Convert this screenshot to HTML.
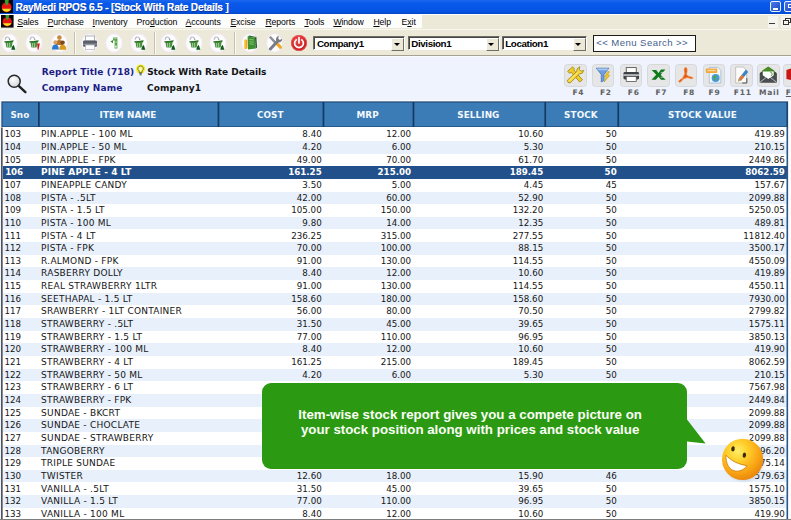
<!DOCTYPE html>
<html><head><meta charset="utf-8"><title>RayMedi RPOS 6.5</title>
<style>
html,body{margin:0;padding:0}
body{width:791px;height:520px;overflow:hidden;position:relative;background:#eef3fd;font-family:"Liberation Sans",sans-serif}
div,span{box-sizing:border-box}
.abs{position:absolute}
#title{left:0;top:0;width:791px;height:14.4px;background:linear-gradient(#1a66ee 0,#0858ea 25%,#0654e4 80%,#0448c8 100%)}
#title .t{position:absolute;left:15.6px;top:0.7px;font:bold 10px/13.6px "Liberation Sans",sans-serif;color:#fff;white-space:nowrap;letter-spacing:-0.13px;text-shadow:0.6px 0.6px 0 #0a3796,0.3px 0 0 #fff}
.wb{position:absolute;top:1.2px;width:10.8px;height:11px;border:1px solid #e8effc;border-radius:2px;background:linear-gradient(135deg,#4a7ae8,#1c48c4)}
#menubg{left:0;top:14.4px;width:791px;height:14.6px;background:#ece9d8;border-top:1px solid #fdfdfb}
#menu{left:0;top:14.4px;width:791px;height:14.6px;border-top:1px solid transparent}
#menuw{left:0;top:15px;width:421.5px;height:13.2px;background:#fdfdfc}
#menu span{position:absolute;top:-0.6px;font:8.7px/14px "Liberation Sans",sans-serif;color:#000;white-space:nowrap;letter-spacing:-0.08px}
#menu u{text-decoration:underline}
#tool{left:0;top:29px;width:791px;height:26px;background:#ece9d8;border-top:1px solid #f8f7f0}
#tline{left:0;top:54.8px;width:791px;height:1.3px;background:#a5a294}
#tline2{left:0;top:56.1px;width:791px;height:1.3px;background:#fafbfd}
.blob{position:absolute;border-radius:50%;background:radial-gradient(closest-side,#fff 0,#fdfcfc 70%,#ede6e8 88%,rgba(236,232,220,0) 100%)}
.combo{position:absolute;top:36px;height:14px;background:#fff;border:1px solid #6e6e64;border-right-color:#fff;border-bottom-color:#fff;box-shadow:inset 1px 1px 0 #444;font:bold 9.8px/14.2px "Liberation Sans",sans-serif;color:#000;padding-left:2.7px;white-space:nowrap;letter-spacing:-0.4px}
.combo i{position:absolute;right:0;top:1.4px;width:11.2px;height:10.8px;background:#ece9d8;border:1px solid #fff;border-right-color:#6e6e64;border-bottom-color:#6e6e64}
.combo i:after{content:"";position:absolute;left:1.6px;top:3.2px;border:3.2px solid transparent;border-top:3.4px solid #000;border-bottom:0}
#msearch{left:592.6px;top:35px;width:103.2px;height:16.6px;background:#fff;border:1px solid #1c1c1c;font:9.6px/13px "Liberation Sans",sans-serif;color:#44628c;padding-left:2.6px;letter-spacing:0.42px;white-space:nowrap}
.lbl{position:absolute;font:bold 9px/12px "DejaVu Sans",sans-serif;white-space:nowrap;letter-spacing:0.12px}
#thw{left:0;top:99.6px;width:791px;height:1.8px;background:#fbfcfe}
#th{left:1.4px;top:101.4px;width:786.7px;height:26px}
#th span{position:absolute;top:1px;height:24px;font:bold 8.8px/27.6px "DejaVu Sans",sans-serif;color:#f4f8fc;text-align:center;white-space:nowrap;letter-spacing:0.1px}
#tb{left:1.4px;top:127.3px;width:786.7px;height:393px;background:#fff}
#rt{left:788.1px;top:99.6px;width:3px;height:421px;background:#fbfcfe}
.r{position:absolute;left:2.6px;width:784.4px;height:12.65px;font:8.7px/12.9px "DejaVu Sans",sans-serif;color:#161616;white-space:nowrap}
.r.alt{background:#e8f0fb}
.r.sel{background:#22508a;color:#fff;font-weight:bold}
.r span{position:absolute;top:0}
.c0{left:1.9px}.sel .c0{left:2.6px;letter-spacing:-0.15px}.c1{left:38.5px;font-size:9px;letter-spacing:0.25px}
.sel .c1{letter-spacing:0.1px}
.c2{right:465.3px}.c3{right:375.9px}.c4{right:243.8px}.c5{right:170.3px}.c6{right:2.2px}
#bubble{left:262px;top:382.8px;width:425.4px;height:85.8px;background:#2b9a12;border-radius:9px}
#btail{left:686px;top:419px}
#bubble .t{position:absolute;left:-4.6px;top:24.6px;width:425.4px;text-align:center;font:bold 13.3px/15px "Liberation Sans",sans-serif;color:#fbfff6;white-space:nowrap}
.fk{position:absolute;top:87.4px;font:bold 7.5px/11px "DejaVu Sans",sans-serif;color:#606060;white-space:nowrap;letter-spacing:0.75px}
.fb{position:absolute;top:64.1px;height:22.8px;border-radius:3.5px;background:#e6e6e6;border:1px solid #d6d8dc}
</style></head><body>
<div id="title" class="abs"><span class="t">RayMedi RPOS 6.5 - [Stock With Rate Details ]</span>
<div class="wb" style="left:770.3px"><div class="abs" style="left:1.8px;top:5.6px;width:4.6px;height:2px;background:#fff"></div></div>
<div class="wb" style="left:783.6px"><div class="abs" style="left:3px;top:2px;width:4px;height:3.4px;border:1px solid #fff;border-top-width:1.6px"></div></div>
</div>
<svg class="abs" style="left:0px;top:0px" width="13.4" height="13.4" viewBox="0 0 13 13"><rect width="13" height="13" fill="#060606"/><circle cx="6.4" cy="7" r="4.8" fill="#e81414"/><path d="M2 8.6 h8.8 a4.8 4.8 0 0 1 -8.8 0z" fill="#f0e020"/><path d="M4.6 0 H8.6 L7.6 4.6 Q6.4 5.4 5.4 4.6z" fill="#3c9a2c"/></svg>
<div id="menubg" class="abs"></div><div id="menuw" class="abs"></div>
<div id="menu" class="abs">
<span style="left:17.2px"><u>S</u>ales</span>
<span style="left:47.6px"><u>P</u>urchase</span>
<span style="left:92.6px"><u>I</u>nventory</span>
<span style="left:136.6px">Pro<u>d</u>uction</span>
<span style="left:185.6px"><u>A</u>ccounts</span>
<span style="left:230.4px"><u>E</u>xcise</span>
<span style="left:265.4px"><u>R</u>eports</span>
<span style="left:304.4px"><u>T</u>ools</span>
<span style="left:333.4px"><u>W</u>indow</span>
<span style="left:373.4px"><u>H</u>elp</span>
<span style="left:401.6px">E<u>x</u>it</span>
</div>
<svg class="abs" style="left:1.4px;top:15.2px" width="12.6" height="12.6" viewBox="0 0 13 13"><rect width="13" height="13" fill="#060606"/><circle cx="6.4" cy="7" r="4.8" fill="#e81414"/><path d="M2 8.6 h8.8 a4.8 4.8 0 0 1 -8.8 0z" fill="#f0e020"/><path d="M4.6 0 H8.6 L7.6 4.6 Q6.4 5.4 5.4 4.6z" fill="#3c9a2c"/></svg>
<div class="abs" style="left:767.8px;top:16px;width:10.2px;height:11.6px;background:#f5f4ee"></div><div class="abs" style="left:781px;top:16px;width:10px;height:11.6px;background:#f5f4ee"></div>
<div class="abs" style="left:769.4px;top:22.8px;width:5.2px;height:1.7px;background:#3a3a3a"></div>
<div class="abs" style="left:785.4px;top:17.8px;width:6px;height:5px;border:1px solid #333;border-top-width:1.6px"></div>
<div class="abs" style="left:783.2px;top:20.2px;width:6px;height:5px;border:1px solid #333;border-top-width:1.6px;background:#f5f4ee"></div>
<div id="tool" class="abs"></div>
<div id="tline" class="abs"></div><div id="tline2" class="abs"></div>
<div class="combo" style="left:313.2px;width:92px">Company1<i></i></div>
<div class="combo" style="left:407.6px;width:92.2px">Division1<i></i></div>
<div class="combo" style="left:501.6px;width:85.4px">Location1<i></i></div>
<div id="msearch" class="abs">&lt;&lt; Menu Search &gt;&gt;</div>
<span class="lbl" style="left:41.8px;top:66.1px;color:#1c1c84">Report Title (718)</span>
<span class="lbl" style="left:147.2px;top:66.1px;color:#141414;letter-spacing:-0.05px">Stock With Rate Details</span>
<span class="lbl" style="left:41.8px;top:81.8px;color:#1c1c84">Company Name</span>
<span class="lbl" style="left:147px;top:81.8px;color:#141414">Company1</span>
<div class="blob" style="left:-0.4px;top:32.1px;width:19.6px;height:22px"></div>
<div class="blob" style="left:24.4px;top:32.1px;width:19.6px;height:22px"></div>
<div class="blob" style="left:49.6px;top:32.1px;width:19.6px;height:22px"></div>
<div class="blob" style="left:79.9px;top:32.1px;width:19.6px;height:22px"></div>
<div class="blob" style="left:104.1px;top:32.1px;width:19.6px;height:22px"></div>
<div class="blob" style="left:129.0px;top:32.1px;width:19.6px;height:22px"></div>
<div class="blob" style="left:159.4px;top:32.1px;width:19.6px;height:22px"></div>
<div class="blob" style="left:184.4px;top:32.1px;width:19.6px;height:22px"></div>
<div class="blob" style="left:208.4px;top:32.1px;width:19.6px;height:22px"></div>
<div class="blob" style="left:240.4px;top:32.1px;width:19.6px;height:22px"></div>
<div class="blob" style="left:264.8px;top:32.1px;width:19.6px;height:22px"></div>
<svg class="abs" style="left:-0.6px;top:32.7px" width="20" height="20" viewBox="0 0 20 20">
<path d="M6.2 6.8 C6.2 3.2 10.2 3 10.6 6.2" fill="none" stroke="#b9b6cc" stroke-width="1.1"/>
<path d="M10 5.6 l1.6 0.4 l-1.2 1.2z" fill="#6d8f6d"/>
<path d="M5.2 8.6 L14.6 7.6 L13.6 9.6 L12.6 14.6 L7.4 14.6 L6.6 9.8z" fill="#468f3c"/>
<path d="M5.2 8.6 L14.6 7.6 L14.2 8.8 L5.8 9.6z" fill="#2c7028"/>
<path d="M8.6 10 v4.2 M10.6 10 v4.2" stroke="#c9e6c0" stroke-width="0.7"/>
<path d="M12.2 16.8 l1.2 -3.6 l0.9 -1.4 l0.9 1.4 l1.1 3.6z" fill="#0d5a1c"/>
</svg>
<svg class="abs" style="left:24.2px;top:32.7px" width="20" height="20" viewBox="0 0 20 20">
<path d="M6.2 6.8 C6.2 3.2 10.2 3 10.6 6.2" fill="none" stroke="#b9b6cc" stroke-width="1.1"/>
<path d="M10 5.6 l1.6 0.4 l-1.2 1.2z" fill="#6d8f6d"/>
<path d="M5.2 8.6 L14.6 7.6 L13.6 9.6 L12.6 14.6 L7.4 14.6 L6.6 9.8z" fill="#468f3c"/>
<path d="M5.2 8.6 L14.6 7.6 L14.2 8.8 L5.8 9.6z" fill="#2c7028"/>
<path d="M8.6 10 v4.2 M10.6 10 v4.2" stroke="#c9e6c0" stroke-width="0.7"/>
<path d="M13.2 10.5 l2.6 0 l-0.6 3 l-0.7 3.2 l-0.9 0z" fill="#e0101c"/>
</svg>
<svg class="abs" style="left:49.4px;top:32.7px" width="20" height="20" viewBox="0 0 20 20">
<circle cx="10.4" cy="4.6" r="2.3" fill="#c98a3a"/><path d="M6.8 12 q0 -5 3.6 -5 q3.6 0 3.6 5z" fill="#b5722c"/>
<circle cx="6.4" cy="9.4" r="2.1" fill="#d9a05a"/><path d="M3 16.6 q0 -5 3.4 -5 q3.4 0 3.4 5z" fill="#2a78d0"/>
<circle cx="13.6" cy="9.6" r="2.2" fill="#7a4a1c"/><path d="M10.2 16.8 q0 -5 3.4 -5 q3.6 0 3.6 5z" fill="#d99a20"/>
</svg>
<div class="abs" style="left:74.2px;top:32px;width:1px;height:22px;background:#c5c2b0"></div><div class="abs" style="left:75.2px;top:32px;width:1px;height:22px;background:#fbfaf5"></div>
<svg class="abs" style="left:79.7px;top:32.7px" width="20" height="20" viewBox="0 0 20 20">
<rect x="5.6" y="3" width="8.8" height="5" fill="#fff" stroke="#9aa0a8" stroke-width="0.8"/>
<rect x="3" y="7.4" width="14" height="6.4" rx="1.2" fill="#5b6068"/>
<rect x="3" y="10.6" width="14" height="1.2" fill="#8d939b"/>
<rect x="5.6" y="12" width="8.8" height="4.6" fill="#fff" stroke="#b0b4ba" stroke-width="0.7"/>
</svg>
<svg class="abs" style="left:103.9px;top:32.7px" width="20" height="20" viewBox="0 0 20 20">
<path d="M9 4.4 h4.4 v3 h-4.4z M10.6 7.4 h2.8 v8 h-2.8z" fill="#5aa64a"/>
<path d="M6.4 8.6 l2.6 -1.6 v3.2z" fill="#3c8a34"/>
<path d="M10.8 12.6 h2 v2 h-2z" fill="#d7ecd0"/>
<path d="M9.6 5.4 h3 M11 9 h2" stroke="#cfe8c8" stroke-width="0.7"/>
</svg>
<svg class="abs" style="left:128.8px;top:32.7px" width="20" height="20" viewBox="0 0 20 20">
<path d="M6.2 6.8 C6.2 3.2 10.2 3 10.6 6.2" fill="none" stroke="#b9b6cc" stroke-width="1.1"/>
<path d="M10 5.6 l1.6 0.4 l-1.2 1.2z" fill="#6d8f6d"/>
<path d="M5.2 8.6 L14.6 7.6 L13.6 9.6 L12.6 14.6 L7.4 14.6 L6.6 9.8z" fill="#468f3c"/>
<path d="M5.2 8.6 L14.6 7.6 L14.2 8.8 L5.8 9.6z" fill="#2c7028"/>
<path d="M8.6 10 v4.2 M10.6 10 v4.2" stroke="#c9e6c0" stroke-width="0.7"/>
<path d="M12.2 16.8 l1.2 -3.6 l0.9 -1.4 l0.9 1.4 l1.1 3.6z" fill="#0d5a1c"/>
</svg>
<div class="abs" style="left:154.0px;top:32px;width:1px;height:22px;background:#c5c2b0"></div><div class="abs" style="left:155.0px;top:32px;width:1px;height:22px;background:#fbfaf5"></div>
<svg class="abs" style="left:159.2px;top:32.7px" width="20" height="20" viewBox="0 0 20 20">
<path d="M6.2 6.8 C6.2 3.2 10.2 3 10.6 6.2" fill="none" stroke="#b9b6cc" stroke-width="1.1"/>
<path d="M10 5.6 l1.6 0.4 l-1.2 1.2z" fill="#6d8f6d"/>
<path d="M5.2 8.6 L14.6 7.6 L13.6 9.6 L12.6 14.6 L7.4 14.6 L6.6 9.8z" fill="#468f3c"/>
<path d="M5.2 8.6 L14.6 7.6 L14.2 8.8 L5.8 9.6z" fill="#2c7028"/>
<path d="M8.6 10 v4.2 M10.6 10 v4.2" stroke="#c9e6c0" stroke-width="0.7"/>
<path d="M12.2 16.8 l1.2 -3.6 l0.9 -1.4 l0.9 1.4 l1.1 3.6z" fill="#0d5a1c"/>
</svg>
<svg class="abs" style="left:184.2px;top:32.7px" width="20" height="20" viewBox="0 0 20 20">
<path d="M6.2 6.8 C6.2 3.2 10.2 3 10.6 6.2" fill="none" stroke="#b9b6cc" stroke-width="1.1"/>
<path d="M10 5.6 l1.6 0.4 l-1.2 1.2z" fill="#6d8f6d"/>
<path d="M5.2 8.6 L14.6 7.6 L13.6 9.6 L12.6 14.6 L7.4 14.6 L6.6 9.8z" fill="#468f3c"/>
<path d="M5.2 8.6 L14.6 7.6 L14.2 8.8 L5.8 9.6z" fill="#2c7028"/>
<path d="M8.6 10 v4.2 M10.6 10 v4.2" stroke="#c9e6c0" stroke-width="0.7"/>
<path d="M12.2 16.8 l1.2 -3.6 l0.9 -1.4 l0.9 1.4 l1.1 3.6z" fill="#0d5a1c"/>
</svg>
<svg class="abs" style="left:208.2px;top:32.7px" width="20" height="20" viewBox="0 0 20 20">
<path d="M6.2 6.8 C6.2 3.2 10.2 3 10.6 6.2" fill="none" stroke="#b9b6cc" stroke-width="1.1"/>
<path d="M10 5.6 l1.6 0.4 l-1.2 1.2z" fill="#6d8f6d"/>
<path d="M5.2 8.6 L14.6 7.6 L13.6 9.6 L12.6 14.6 L7.4 14.6 L6.6 9.8z" fill="#468f3c"/>
<path d="M5.2 8.6 L14.6 7.6 L14.2 8.8 L5.8 9.6z" fill="#2c7028"/>
<path d="M8.6 10 v4.2 M10.6 10 v4.2" stroke="#c9e6c0" stroke-width="0.7"/>
<path d="M12.2 16.8 l1.2 -3.6 l0.9 -1.4 l0.9 1.4 l1.1 3.6z" fill="#0d5a1c"/>
</svg>
<div class="abs" style="left:234.0px;top:32px;width:1px;height:22px;background:#c5c2b0"></div><div class="abs" style="left:235.0px;top:32px;width:1px;height:22px;background:#fbfaf5"></div>
<svg class="abs" style="left:240.2px;top:32.7px" width="20" height="20" viewBox="0 0 20 20">
<path d="M7.6 3.6 L15 4.8 L15.8 15.6 L8 16.6z" fill="#3f8f34"/>
<path d="M7.6 3.6 L9.4 2.6 L16.4 4 L15 4.8z" fill="#2c6a26"/>
<path d="M15 4.8 L16.4 4 L17 14.6 L15.8 15.6z" fill="#1f4f20"/>
<path d="M9.4 6.4 L13.8 7 M9.4 8.6 L13.8 9.2 M9.4 10.8 L13.8 11.4" stroke="#78c060" stroke-width="1.1"/>
<rect x="4.4" y="6.6" width="3" height="9.4" rx="1.3" fill="#f0a818"/>
<rect x="4.4" y="6.6" width="1.2" height="9.4" rx="0.6" fill="#f8d048"/>
</svg>
<svg class="abs" style="left:264.6px;top:32.7px" width="20" height="20" viewBox="0 0 20 20">
<path d="M4 4.6 L5.8 3 L12.2 9.8 L10.4 11.6z" fill="#8a8e96"/>
<path d="M10 10.8 L12.4 8.6 L16.8 13.4 Q17.4 16.2 14.6 15.8z" fill="#f0a820"/>
<path d="M3.8 15.4 L11.2 7.6 Q10.2 4.2 13.8 2.8 L13.2 5.6 L14.8 7 L17.2 5.8 Q17 9.6 13.4 9.6 L6 17.4 Q3.8 17.6 3.8 15.4z" fill="#787c84"/>
</svg>
<svg class="abs" style="left:289.1px;top:32.9px" width="20" height="20" viewBox="0 0 20 20">
<defs><radialGradient id="pg" cx="0.4" cy="0.3" r="0.8"><stop offset="0" stop-color="#f04a4a"/><stop offset="1" stop-color="#c41016"/></radialGradient></defs>
<circle cx="10" cy="10" r="8" fill="url(#pg)"/>
<circle cx="10" cy="10" r="7.6" fill="none" stroke="#e86a6a" stroke-width="0.6"/>
<path d="M7.2 6.8 A4.4 4.4 0 1 0 12.8 6.8" fill="none" stroke="#fff" stroke-width="1.7" stroke-linecap="round"/>
<path d="M10 4.6 V10" stroke="#fff" stroke-width="1.7" stroke-linecap="round"/>
</svg>
<div class="fb" style="left:564.2px;width:22.6px"></div>
<div class="fb" style="left:591.8px;width:22.6px"></div>
<div class="fb" style="left:619.6px;width:22.6px"></div>
<div class="fb" style="left:647.2px;width:22.6px"></div>
<div class="fb" style="left:674.8px;width:22.6px"></div>
<div class="fb" style="left:702.6px;width:22.6px"></div>
<div class="fb" style="left:730.4px;width:22.6px"></div>
<div class="fb" style="left:757.4px;width:22.6px"></div>
<div class="fb" style="left:783.4px;width:22.6px"></div>
<svg class="abs" style="left:564.2px;top:64.3px" width="22.5" height="22" viewBox="0 0 22 22"><g stroke="#8a7410" stroke-width="0.7" stroke-linejoin="round">
<path d="M6.6 4.4 L3.4 7.2 L5.4 9.4 L7 8.2 L15.4 18 L18.2 15.8 L9.6 6 L10.2 4.8 L8.4 2.8z" fill="#f0cc24"/>
<path d="M3 16.4 L12.4 7.6 Q12 4 15.6 2.8 L15 5.6 L16.8 7.2 L19.4 6.4 Q19 10 15 10 L5.8 19 Q3.2 19 3 16.4z" fill="#f6d83c"/>
</g>
<path d="M5 16.6 L13.4 8.6" stroke="#fbeb8a" stroke-width="0.9"/></svg>
<svg class="abs" style="left:591.8px;top:64.3px" width="22.5" height="22" viewBox="0 0 22 22"><path d="M4 4.2 H16.6 L11.8 10.4 V16.4 L9 18 V10.4z" fill="#6f9fe0" stroke="#3f68b0" stroke-width="0.7"/>
<path d="M4.6 4.6 H16 L14.8 6.2 H5.8z" fill="#a8c8f4"/>
<path d="M15.6 7.4 L12.2 12.6 L14.2 12.8 L11.8 18 L17.4 11.4 L15.2 11.2 L17.2 7.8z" fill="#f4cc20" stroke="#b08a10" stroke-width="0.5"/></svg>
<svg class="abs" style="left:619.6px;top:64.3px" width="22.5" height="22" viewBox="0 0 22 22"><rect x="6" y="3.6" width="10" height="5" fill="#fff" stroke="#555" stroke-width="0.9"/>
<rect x="3.2" y="8" width="15.6" height="7.4" rx="1.4" fill="#3e4248"/>
<rect x="3.2" y="10.4" width="15.6" height="1.3" fill="#e8e8e8"/>
<rect x="6" y="12.6" width="10" height="4.8" fill="#fff" stroke="#555" stroke-width="0.8"/></svg>
<svg class="abs" style="left:647.2px;top:64.3px" width="22.5" height="22" viewBox="0 0 22 22"><path d="M4.4 6 L9 6 L11.2 9 L13.8 5.6 L18.2 5.6 L13.4 10.8 L18.4 15.8 L13.8 15.8 L11.2 12.8 L8.6 15.8 L4.2 15.8 L9 10.8z" fill="#0f7a1c"/>
<path d="M13.4 8.4 H18 M14 10.8 H18.4 M13.4 13.2 H18" stroke="#e6e6e6" stroke-width="0.7"/></svg>
<svg class="abs" style="left:674.8px;top:64.3px" width="22.5" height="22" viewBox="0 0 22 22"><path d="M10.4 3.4 C12.6 3.6 11.8 8.4 11.2 10.4 C13.2 13 16.6 12.6 17.6 13.6 C18.4 15 15.2 15 12.6 13.6 C10.6 14 8.6 14.8 7.4 15.4 C6 17.8 4.2 19 3.6 17.8 C3.2 16.4 5.8 15 7.2 14.4 C8.4 12.4 9.2 10.6 9.6 9.2 C8.8 6.8 8.6 3.4 10.4 3.4z" fill="#e85a1c" stroke="#f08a3a" stroke-width="0.7"/></svg>
<svg class="abs" style="left:702.6px;top:64.3px" width="22.5" height="22" viewBox="0 0 22 22"><path d="M6 3.4 H14.6 L17.6 6.4 V19 H6z" fill="#f4f8fc" stroke="#9ab8dc" stroke-width="0.8"/>
<rect x="2.6" y="4.4" width="11.4" height="4.6" rx="0.8" fill="#f0a83c"/>
<rect x="4.2" y="5.8" width="8" height="1.4" fill="#f8d8a0"/>
<circle cx="12.4" cy="14" r="4" fill="#4a9ad8"/>
<path d="M10.4 12 q2 -1.2 3 0.4 q-0.6 1.6 -2 1.4 q0 1.8 1.2 3 q-2.4 -0.4 -2.6 -3z M14.4 14 q1.4 0.4 0.8 2 q-1.2 0.4 -0.8 -2z" fill="#4aa83c"/></svg>
<svg class="abs" style="left:730.4px;top:64.3px" width="22.5" height="22" viewBox="0 0 22 22"><path d="M5.4 3 H13 L16.4 6.4 V19 H5.4z" fill="#fbfbfb" stroke="#b8b8b8" stroke-width="0.8"/>
<path d="M15.6 5.6 L18 8 L10.8 16.4 L7.8 17.6 L8.6 14.4z" fill="#3a86c8"/>
<path d="M8.6 14.4 L10.8 16.4 L7.8 17.6z" fill="#e8a040"/>
<path d="M11.6 10.8 L13.8 12.8 L10.8 16.4 L8.6 14.4z" fill="#e87830"/>
<path d="M16.6 14 V19 H12" fill="none" stroke="#555" stroke-width="1"/></svg>
<svg class="abs" style="left:757.4px;top:64.3px" width="22.5" height="22" viewBox="0 0 22 22"><path d="M2.6 9 L11 3 L19.4 9 V18.4 H2.6z" fill="#3c4044"/>
<path d="M5 6.6 L11 2.4 L17 6.6 V11 H5z" fill="#4a8a2a"/>
<path d="M5.6 7.6 H16.4 V12.6 L11 15.4 L5.6 12.6z" fill="#fff"/>
<path d="M13 8.2 q2 0 2 2 q0 1.4 -1.4 1.4" fill="none" stroke="#4a8a2a" stroke-width="0.9"/>
<path d="M2.6 9.4 L11 15 L19.4 9.4 V18.4 H2.6z" fill="#4a4e52"/>
<path d="M2.8 18.2 L9 13.4 M19.2 18.2 L13 13.4" stroke="#d8d8d8" stroke-width="0.8"/></svg>
<svg class="abs" style="left:783.4px;top:64.3px" width="8" height="22" viewBox="0 0 8 22"><path d="M3.4 6 L8 4.6 V16 L3.4 15z" fill="#c81818"/></svg>
<span class="fk" style="left:572.4px">F4</span>
<span class="fk" style="left:600px">F2</span>
<span class="fk" style="left:627.8px">F6</span>
<span class="fk" style="left:655.4px">F7</span>
<span class="fk" style="left:683.2px">F8</span>
<span class="fk" style="left:708.6px">F9</span>
<span class="fk" style="left:733.8px">F11</span>
<span class="fk" style="left:759px">Mail</span>
<span class="fk" style="left:785.8px;text-decoration:underline">F</span>
<svg class="abs" style="left:4px;top:70px" width="26" height="26" viewBox="0 0 26 26">
<defs><radialGradient id="mg" cx="0.4" cy="0.35" r="0.7"><stop offset="0" stop-color="#ffffff"/><stop offset="1" stop-color="#cfd4da"/></radialGradient></defs>
<path d="M14.4 15.6 L21.4 22.2" stroke="#222" stroke-width="2.4" stroke-linecap="round"/>
<circle cx="10.2" cy="11.2" r="6" fill="url(#mg)" stroke="#2a2a2a" stroke-width="1.5"/>
</svg>
<svg class="abs" style="left:135px;top:64px" width="11" height="13" viewBox="0 0 11 13">
<circle cx="5.6" cy="5" r="4.6" fill="#f4f020"/>
<path d="M5.6 2 a2.6 2.6 0 0 1 1.5 4.8 v1.6 h-3 v-1.6 a2.6 2.6 0 0 1 1.5 -4.8z" fill="#fbf8a0" stroke="#5a5a10" stroke-width="0.8"/>
<path d="M4.4 9.6 h2.4 M4.6 10.8 h2" stroke="#444" stroke-width="0.9"/>
</svg>
<div id="thw" class="abs"></div><div id="rt" class="abs"></div>
<svg class="abs" style="left:0;top:100px" width="791" height="30" viewBox="0 0 791 30">
<rect x="1.4" y="1.4" width="786.7" height="26.1" fill="#1b456f"/>
<rect x="2.5" y="2.5" width="783.9" height="23.9" fill="#3b7cb7"/>
<g fill="#143a62"><rect x="38" y="2" width="1.7" height="25"/><rect x="217.6" y="2" width="1.7" height="25"/><rect x="322.6" y="2" width="1.7" height="25"/><rect x="412.6" y="2" width="1.7" height="25"/><rect x="544.4" y="2" width="1.7" height="25"/><rect x="617.4" y="2" width="1.7" height="25"/></g>
</svg>
<div id="th" class="abs">
<span style="left:0;width:37px">Sno</span>
<span style="left:36.6px;width:180px">ITEM NAME</span>
<span style="left:216.4px;width:105px">COST</span>
<span style="left:321px;width:90.4px">MRP</span>
<span style="left:411px;width:132px">SELLING</span>
<span style="left:543px;width:73px">STOCK</span>
<span style="left:617px;width:168px">STOCK VALUE</span>
</div>
<div id="tb" class="abs"></div>
<div class="r" style="top:128.30px"><span class="c0">103</span><span class="c1">PIN.APPLE - 100 ML</span><span class="c2">8.40</span><span class="c3">12.00</span><span class="c4">10.60</span><span class="c5">50</span><span class="c6">419.89</span></div>
<div class="r alt" style="top:140.95px"><span class="c0">104</span><span class="c1">PIN.APPLE - 50 ML</span><span class="c2">4.20</span><span class="c3">6.00</span><span class="c4">5.30</span><span class="c5">50</span><span class="c6">210.15</span></div>
<div class="r" style="top:153.60px"><span class="c0">105</span><span class="c1">PIN.APPLE - FPK</span><span class="c2">49.00</span><span class="c3">70.00</span><span class="c4">61.70</span><span class="c5">50</span><span class="c6">2449.86</span></div>
<div class="r sel" style="top:166.25px"><span class="c0">106</span><span class="c1">PINE APPLE - 4 LT</span><span class="c2">161.25</span><span class="c3">215.00</span><span class="c4">189.45</span><span class="c5">50</span><span class="c6">8062.59</span></div>
<div class="r" style="top:178.90px"><span class="c0">107</span><span class="c1">PINEAPPLE CANDY</span><span class="c2">3.50</span><span class="c3">5.00</span><span class="c4">4.45</span><span class="c5">45</span><span class="c6">157.67</span></div>
<div class="r alt" style="top:191.55px"><span class="c0">108</span><span class="c1">PISTA - .5LT</span><span class="c2">42.00</span><span class="c3">60.00</span><span class="c4">52.90</span><span class="c5">50</span><span class="c6">2099.88</span></div>
<div class="r" style="top:204.20px"><span class="c0">109</span><span class="c1">PISTA - 1.5 LT</span><span class="c2">105.00</span><span class="c3">150.00</span><span class="c4">132.20</span><span class="c5">50</span><span class="c6">5250.05</span></div>
<div class="r alt" style="top:216.85px"><span class="c0">110</span><span class="c1">PISTA - 100 ML</span><span class="c2">9.80</span><span class="c3">14.00</span><span class="c4">12.35</span><span class="c5">50</span><span class="c6">489.81</span></div>
<div class="r" style="top:229.50px"><span class="c0">111</span><span class="c1">PISTA - 4 LT</span><span class="c2">236.25</span><span class="c3">315.00</span><span class="c4">277.55</span><span class="c5">50</span><span class="c6">11812.40</span></div>
<div class="r alt" style="top:242.15px"><span class="c0">112</span><span class="c1">PISTA - FPK</span><span class="c2">70.00</span><span class="c3">100.00</span><span class="c4">88.15</span><span class="c5">50</span><span class="c6">3500.17</span></div>
<div class="r" style="top:254.80px"><span class="c0">113</span><span class="c1">R.ALMOND - FPK</span><span class="c2">91.00</span><span class="c3">130.00</span><span class="c4">114.55</span><span class="c5">50</span><span class="c6">4550.09</span></div>
<div class="r alt" style="top:267.45px"><span class="c0">114</span><span class="c1">RASBERRY DOLLY</span><span class="c2">8.40</span><span class="c3">12.00</span><span class="c4">10.60</span><span class="c5">50</span><span class="c6">419.89</span></div>
<div class="r" style="top:280.10px"><span class="c0">115</span><span class="c1">REAL STRAWBERRY 1LTR</span><span class="c2">91.00</span><span class="c3">130.00</span><span class="c4">114.55</span><span class="c5">50</span><span class="c6">4550.11</span></div>
<div class="r alt" style="top:292.75px"><span class="c0">116</span><span class="c1">SEETHAPAL - 1.5 LT</span><span class="c2">158.60</span><span class="c3">180.00</span><span class="c4">158.60</span><span class="c5">50</span><span class="c6">7930.00</span></div>
<div class="r" style="top:305.40px"><span class="c0">117</span><span class="c1">SRAWBERRY - 1LT CONTAINER</span><span class="c2">56.00</span><span class="c3">80.00</span><span class="c4">70.50</span><span class="c5">50</span><span class="c6">2799.82</span></div>
<div class="r alt" style="top:318.05px"><span class="c0">118</span><span class="c1">STRAWBERRY - .5LT</span><span class="c2">31.50</span><span class="c3">45.00</span><span class="c4">39.65</span><span class="c5">50</span><span class="c6">1575.11</span></div>
<div class="r" style="top:330.70px"><span class="c0">119</span><span class="c1">STRAWBERRY - 1.5 LT</span><span class="c2">77.00</span><span class="c3">110.00</span><span class="c4">96.95</span><span class="c5">50</span><span class="c6">3850.13</span></div>
<div class="r alt" style="top:343.35px"><span class="c0">120</span><span class="c1">STRAWBERRY - 100 ML</span><span class="c2">8.40</span><span class="c3">12.00</span><span class="c4">10.60</span><span class="c5">50</span><span class="c6">419.90</span></div>
<div class="r" style="top:356.00px"><span class="c0">121</span><span class="c1">STRAWBERRY - 4 LT</span><span class="c2">161.25</span><span class="c3">215.00</span><span class="c4">189.45</span><span class="c5">50</span><span class="c6">8062.59</span></div>
<div class="r alt" style="top:368.65px"><span class="c0">122</span><span class="c1">STRAWBERRY - 50 ML</span><span class="c2">4.20</span><span class="c3">6.00</span><span class="c4">5.30</span><span class="c5">50</span><span class="c6">210.15</span></div>
<div class="r" style="top:381.30px"><span class="c0">123</span><span class="c1">STRAWBERRY - 6 LT</span><span class="c2">151.35</span><span class="c3">200.00</span><span class="c4">178.05</span><span class="c5">50</span><span class="c6">7567.98</span></div>
<div class="r alt" style="top:393.95px"><span class="c0">124</span><span class="c1">STRAWBERRY - FPK</span><span class="c2">49.00</span><span class="c3">70.00</span><span class="c4">61.70</span><span class="c5">50</span><span class="c6">2449.84</span></div>
<div class="r" style="top:406.60px"><span class="c0">125</span><span class="c1">SUNDAE - BKCRT</span><span class="c2">42.00</span><span class="c3">60.00</span><span class="c4">52.90</span><span class="c5">50</span><span class="c6">2099.88</span></div>
<div class="r alt" style="top:419.25px"><span class="c0">126</span><span class="c1">SUNDAE - CHOCLATE</span><span class="c2">42.00</span><span class="c3">60.00</span><span class="c4">52.90</span><span class="c5">50</span><span class="c6">2099.88</span></div>
<div class="r" style="top:431.90px"><span class="c0">127</span><span class="c1">SUNDAE - STRAWBERRY</span><span class="c2">42.00</span><span class="c3">60.00</span><span class="c4">52.90</span><span class="c5">50</span><span class="c6">2099.88</span></div>
<div class="r alt" style="top:444.55px"><span class="c0">128</span><span class="c1">TANGOBERRY</span><span class="c2">53.90</span><span class="c3">77.00</span><span class="c4">67.85</span><span class="c5">50</span><span class="c6">2696.20</span></div>
<div class="r" style="top:457.20px"><span class="c0">129</span><span class="c1">TRIPLE SUNDAE</span><span class="c2">73.50</span><span class="c3">105.00</span><span class="c4">92.55</span><span class="c5">50</span><span class="c6">3675.14</span></div>
<div class="r alt" style="top:469.85px"><span class="c0">130</span><span class="c1">TWISTER</span><span class="c2">12.60</span><span class="c3">18.00</span><span class="c4">15.90</span><span class="c5">46</span><span class="c6">579.63</span></div>
<div class="r" style="top:482.50px"><span class="c0">131</span><span class="c1">VANILLA - .5LT</span><span class="c2">31.50</span><span class="c3">45.00</span><span class="c4">39.65</span><span class="c5">50</span><span class="c6">1575.10</span></div>
<div class="r alt" style="top:495.15px"><span class="c0">132</span><span class="c1">VANILLA - 1.5 LT</span><span class="c2">77.00</span><span class="c3">110.00</span><span class="c4">96.95</span><span class="c5">50</span><span class="c6">3850.15</span></div>
<div class="r" style="top:507.80px"><span class="c0">133</span><span class="c1">VANILLA - 100 ML</span><span class="c2">8.40</span><span class="c3">12.00</span><span class="c4">10.60</span><span class="c5">50</span><span class="c6">419.90</span></div>
<svg class="abs" style="left:785px;top:127px" width="4" height="393" viewBox="0 0 4 393"><rect x="1.5" y="0" width="1.6" height="393" fill="#2a5688"/></svg>
<svg class="abs" style="left:0;top:127px" width="4" height="393" viewBox="0 0 4 393"><rect x="1.1" y="0.5" width="1.5" height="393" fill="#3c4046"/></svg>

<div id="bubble" class="abs"><div class="t">Item-wise stock report gives you a compete picture on<br>your stock position along with prices and stock value</div></div>
<svg id="btail" class="abs" width="22" height="27" viewBox="0 0 22 27"><path d="M0 0 L1.4 1 L19.6 24.4 L1 22.6 L0 23z" fill="#2b9a12"/></svg>
<svg class="abs" style="left:719px;top:436px" width="48" height="48" viewBox="0 0 48 48">
<defs><radialGradient id="sg" cx="0.38" cy="0.3" r="0.75"><stop offset="0" stop-color="#ffee6a"/><stop offset="0.3" stop-color="#ffd22e"/><stop offset="0.7" stop-color="#f9a414"/><stop offset="1" stop-color="#e8820c"/></radialGradient>
<radialGradient id="sh" cx="0.5" cy="0.5" r="0.5"><stop offset="0.7" stop-color="#7a8aa0" stop-opacity="0.35"/><stop offset="1" stop-color="#7a8aa0" stop-opacity="0"/></radialGradient></defs>
<circle cx="25" cy="25.5" r="22" fill="url(#sh)"/>
<circle cx="23.6" cy="23.4" r="20.6" fill="url(#sg)"/>
<path d="M7 19.2 C12 24.8 20 28.6 28 29.6 C24.4 35 17.6 36.8 12.6 33.6 C8.8 31 6.6 25 7 19.2z" fill="#fff" stroke="#c87a10" stroke-width="0.8"/>
<ellipse cx="14" cy="12.8" rx="1.7" ry="2.6" fill="#3a2a10" transform="rotate(12 14 12.8)"/>
<ellipse cx="25.4" cy="19.2" rx="1.7" ry="2.6" fill="#3a2a10" transform="rotate(12 25.4 19.2)"/>
</svg>
<div class="abs" style="left:0;top:518.8px;width:791px;height:1.2px;background:#7e7e7e"></div>
</body></html>
